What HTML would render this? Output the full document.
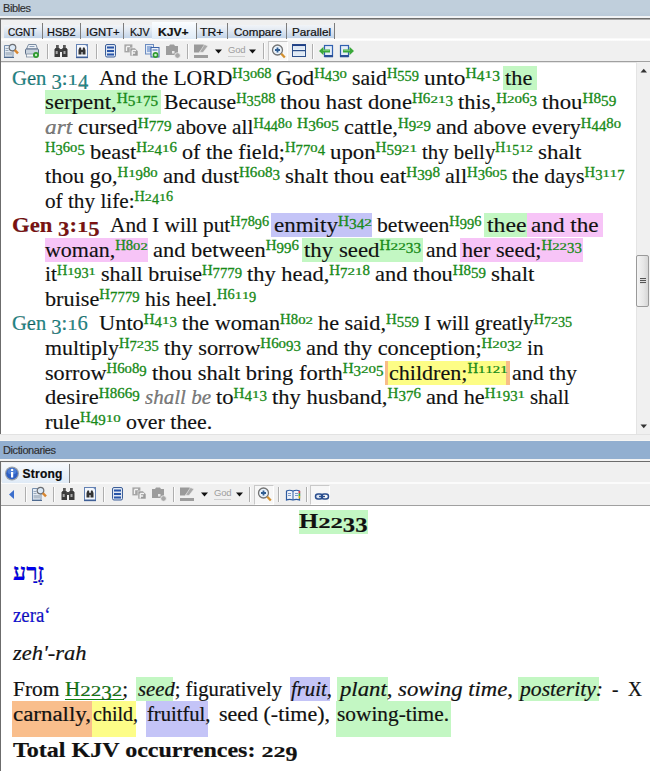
<!DOCTYPE html>
<html><head><meta charset="utf-8">
<style>
*{margin:0;padding:0;box-sizing:border-box}
html,body{width:650px;height:771px;overflow:hidden;background:#f0f0f0;font-family:"Liberation Sans",sans-serif}
.a{position:absolute}
.ttl{position:absolute;left:0;width:650px;font-size:11px;color:#2e2e2e;padding-left:3px;letter-spacing:-0.4px;-webkit-text-stroke:0.15px #2e2e2e}
.tab{position:absolute;top:25px;height:13px;padding-top:1px;background:linear-gradient(#f1f4f8,#e2e9f2 40%,#c2d4e9);font-size:11px;color:#151515;text-align:center;line-height:13px;-webkit-text-stroke:0.2px #151515;letter-spacing:-0.2px}
.tabsel{position:absolute;background:linear-gradient(#fbfdff,#dfebf7);font-size:11px;font-weight:bold;color:#0a0a0a;text-align:center;-webkit-text-stroke:0.2px #0a0a0a}
.tlab{position:absolute;top:26px;font-size:11px;line-height:13px;color:#111;-webkit-text-stroke:0.2px #111;transform-origin:0 0;white-space:nowrap}
.sep{position:absolute;width:1px;background:#7c7c7c}
.tsep{position:absolute;width:2px;border-left:1px solid #c4c4c4;border-right:1px solid #fff}
.ic{position:absolute;width:16px;height:16px}
.vl{position:absolute;white-space:nowrap;font-family:"Liberation Serif",serif;font-size:21px;line-height:24px;color:#111;transform-origin:0 0;-webkit-text-stroke:0.15px #111}
.vl sup span{display:inline-block;line-height:14px}
.lo{transform:scaleY(.74);transform-origin:50% 11.7px}
.de{transform:translateY(2.6px) scaleY(.98)}
.vl sup{font-size:14px;color:#178a17;-webkit-text-stroke:0.3px #178a17;vertical-align:baseline;position:relative;top:-6.5px;line-height:0;font-family:"Liberation Serif",serif}
.ref{color:#1f8a8a}
.ref2{color:#7d1111;font-weight:bold}
.gr{color:#7f7f7f}
.hg{background:#c3f7c3;padding:1px 0}
.hl{background:#c4c4f7;padding:1px 0}
.hp{background:#f7c4f7;padding:1px 0}
.hy{background:#fdfd86;padding:1px 0}
.ho{background:#f8bd88;padding:1px 4px}
.hod{background:#f9be8c;padding:1px 0 11px}
.hyd{background:#fdfd88;padding:1px 0 11px}
.hld{background:#c4c4f7;padding:1px 0 11px}
.hgd{background:#c3f7c3;padding:1px 0 11px}
.dl{position:absolute;white-space:nowrap;font-family:"Liberation Serif",serif;font-size:20px;line-height:24px;color:#111;transform-origin:0 0;-webkit-text-stroke:0.2px #111}
</style></head><body>
<!-- ===== Bibles pane ===== -->
<div class="a" style="left:0;top:0;width:650px;height:16px;background:linear-gradient(#c0cfdc 70%,#bacad9)"></div>
<div class="ttl" style="top:1px;height:16px;line-height:15px">Bibles</div>
<div class="a" style="left:0;top:16px;width:650px;height:2px;background:#f1f3f5"></div>
<div class="a" style="left:0;top:18px;width:650px;height:1px;background:#6e6e6e"></div>
<div class="a" style="left:0;top:19px;width:650px;height:1px;background:#a9a9a9"></div>
<div class="a" style="left:0;top:19px;width:1px;height:415px;background:#6c6c6c"></div>
<div class="a" style="left:1px;top:38px;width:649px;height:3px;background:linear-gradient(#f6f6f6,#fff,#f8f8f8)"></div>
<div class="a" style="left:1px;top:61px;width:649px;height:1px;background:#a0a0a0"></div>
<div class="tab" style="left:4px;width:38px"></div>
<div class="tab" style="left:43px;width:37px"></div>
<div class="tab" style="left:81px;width:42px"></div>
<div class="tab" style="left:124px;width:28px"></div>
<div class="tab" style="left:197px;width:30px"></div>
<div class="tab" style="left:228px;width:58px"></div>
<div class="tab" style="left:287px;width:47px"></div>
<div class="sep" style="left:42px;top:23px;height:16px"></div>
<div class="sep" style="left:80px;top:23px;height:16px"></div>
<div class="sep" style="left:123px;top:23px;height:16px"></div>
<div class="sep" style="left:196px;top:23px;height:16px"></div>
<div class="sep" style="left:227px;top:23px;height:16px"></div>
<div class="sep" style="left:286px;top:23px;height:16px"></div>
<div class="sep" style="left:334px;top:23px;height:16px"></div>
<div class="tabsel" style="left:152px;top:22px;width:44px;height:17px"></div>
<div class="tlab" style="left:8.0px;font-weight:normal;transform:scaleX(0.911)">CGNT</div>
<div class="tlab" style="left:47.2px;font-weight:normal;transform:scaleX(0.993)">HSB2</div>
<div class="tlab" style="left:86.0px;font-weight:normal;transform:scaleX(1.025)">IGNT+</div>
<div class="tlab" style="left:129.5px;font-weight:normal;transform:scaleX(0.969)">KJV</div>
<div class="tlab" style="left:157.5px;font-weight:bold;transform:scaleX(1.101)">KJV+</div>
<div class="tlab" style="left:200.0px;font-weight:normal;transform:scaleX(1.109)">TR+</div>
<div class="tlab" style="left:233.9px;font-weight:normal;transform:scaleX(1.052)">Compare</div>
<div class="tlab" style="left:291.5px;font-weight:normal;transform:scaleX(1.064)">Parallel</div>
<svg class="a" style="left:3px;top:42.5px" width="16" height="16" viewBox="0 0 16 16"><path d="M1.5 2.5h8.5v11.5h-8.5z" fill="#e4ebf4" stroke="#7890ae"/>
<path d="M1 14.5h10" stroke="#4f6a8f"/><rect x="2.5" y="9" width="7" height="3.5" fill="#b3bfcc"/>
<path d="M2.5 5.5h3M2.5 7.5h3" stroke="#9aaabb"/>
<circle cx="9.5" cy="4.6" r="3.3" fill="#dbe9f7" stroke="#6b6e73" stroke-width="1.2"/>
<path d="M11.8 7.2l3.2 3.2" stroke="#d8862f" stroke-width="2.4"/></svg>
<svg class="a" style="left:24px;top:43px" width="16" height="16" viewBox="0 0 16 16"><path d="M4.5 1.5h7.5l1.5 4.5h-11z" fill="#edf1f6" stroke="#7a8ba0"/><path d="M5.5 3.5h5" stroke="#8aa0bb"/>
<rect x="1.5" y="6" width="13" height="5.5" rx="1" fill="#c9d3de" stroke="#5a6d87"/>
<rect x="2.5" y="11" width="9.5" height="3" fill="#f5f7f9" stroke="#7f8ea0" stroke-width=".8"/>
<circle cx="12" cy="12" r="3" fill="#2e9a2e"/><circle cx="12" cy="12" r="1.2" fill="#c8eec8"/></svg>
<div class="a" style="left:47px;top:44px;width:1px;height:15px;background:#aeaeae"></div><div class="a" style="left:48px;top:44px;width:1px;height:15px;background:#fdfdfd"></div>
<svg class="a" style="left:53px;top:43px" width="16" height="16" viewBox="0 0 16 16"><rect x="3" y="2" width="2.8" height="3.5" fill="#5a5a5a"/><rect x="10" y="2" width="2.8" height="3.5" fill="#5a5a5a"/>
<path d="M1.5 6.5l1-1.5h4l.5 1.5v7.5h-5.5z" fill="#3a3a3a"/><path d="M14.5 6.5l-1-1.5h-4l-.5 1.5v7.5h5.5z" fill="#3a3a3a"/>
<rect x="6.5" y="6" width="3" height="3" fill="#444"/><rect x="2.7" y="8" width="2" height="3" fill="#a9a9a9"/><rect x="10.5" y="8" width="2" height="3" fill="#a9a9a9"/></svg>
<svg class="a" style="left:75px;top:43px" width="16" height="16" viewBox="0 0 16 16"><rect x="1.5" y="1.5" width="11" height="12.5" fill="#f3f6fb" stroke="#6482b4"/>
<path d="M1 14.5h12" stroke="#3f5f96" stroke-width="1.3"/><path d="M10 1.2l2.8 2.8" stroke="#6482b4"/>
<path d="M3.5 7l1-2.5h1.5l.5 2.5v4.5h-3zM10.5 7l-1-2.5H8l-.5 2.5v4.5h3z" fill="#333"/><rect x="6" y="7" width="2" height="2" fill="#333"/></svg>
<div class="a" style="left:96px;top:44px;width:1px;height:15px;background:#aeaeae"></div><div class="a" style="left:97px;top:44px;width:1px;height:15px;background:#fdfdfd"></div>
<svg class="a" style="left:104px;top:43px" width="16" height="16" viewBox="0 0 16 16"><rect x="1.5" y="1.5" width="10" height="12.5" rx="1.5" fill="#dfe7f2" stroke="#3d5f99"/>
<rect x="3" y="3.5" width="7" height="2" fill="#2855a8"/><rect x="3" y="7" width="7" height="2" fill="#2855a8"/><rect x="3" y="10.5" width="7" height="2" fill="#2855a8"/></svg>
<svg class="a" style="left:123px;top:43px" width="16" height="16" viewBox="0 0 16 16"><rect x="1.4" y="1.4" width="8" height="8" fill="#a5a5a5"/><path d="M3.5 3.5h3.5M3.5 3.5v4.5" stroke="#f4f4f4" stroke-width="1.3"/>
<path d="M7 5h5l3 3v5H7z" fill="#9a9a9a" stroke="#f0f0f0" stroke-width=".6"/><path d="M9.2 7.5h4M9.2 7.5v5M9.2 10h3" stroke="#f4f4f4" stroke-width="1.4"/></svg>
<svg class="a" style="left:144px;top:43px" width="16" height="16" viewBox="0 0 16 16"><rect x="1.5" y="1.5" width="8" height="9.5" fill="#e3ebf6" stroke="#6c8cc0"/><path d="M3 4h5M3 6h5M3 8h5" stroke="#4a78c2"/>
<rect x="7" y="4.5" width="8" height="9.5" fill="#eef3fa" stroke="#3a62a8"/><path d="M8.5 7h5" stroke="#3a62a8"/>
<circle cx="11.5" cy="12" r="2.9" fill="#2f9a2f"/><circle cx="11.5" cy="12" r="1.3" fill="#d0f0d0"/></svg>
<svg class="a" style="left:165px;top:43px" width="16" height="16" viewBox="0 0 16 16"><path d="M1 3h3l1-1.5h4l1 1.5h3v9H1z" fill="#9c9c9c"/>
<circle cx="12.5" cy="12.5" r="2.8" fill="#a8a8a8" stroke="#f0f0f0" stroke-width=".8"/><rect x="7" y="8" width="2.5" height="2.5" fill="#e8e8e8"/></svg>
<div class="a" style="left:187px;top:44px;width:1px;height:15px;background:#aeaeae"></div><div class="a" style="left:188px;top:44px;width:1px;height:15px;background:#fdfdfd"></div>
<svg class="a" style="left:193px;top:43px" width="16" height="16" viewBox="0 0 16 16"><path d="M1 1.5h9.5l1.5 1.5-6 6.5H1z" fill="#9a9a9a"/><path d="M11.5 1.5l3.5 1.5-5 6.5-3.5-.3z" fill="#a9a9a9" stroke="#f0f0f0" stroke-width=".6"/>
<rect x="1" y="12" width="14" height="3" fill="#9d9d9d"/></svg>
<svg class="a" style="left:214.5px;top:48.5px" width="8" height="5" viewBox="0 0 8 5"><path d="M0 0.5h7L3.5 4.5z" fill="#111"/></svg>
<div class="a" style="left:228px;top:44px;font-size:9.5px;color:#9d9d9d;line-height:11px;border-bottom:1px solid #cfcfcf;padding-bottom:1px;letter-spacing:-0.2px">God</div>
<svg class="a" style="left:249px;top:48.5px" width="8" height="5" viewBox="0 0 8 5"><path d="M0 0.5h7L3.5 4.5z" fill="#111"/></svg>
<div class="a" style="left:263px;top:43px;width:1px;height:16px;background:#aeaeae"></div><div class="a" style="left:264px;top:43px;width:1px;height:16px;background:#fdfdfd"></div>
<div class="a" style="left:268px;top:41px;width:20px;height:20px;background:#f7f7f7;border:1px solid #c9c9c9;border-right-color:#fff;border-bottom-color:#fff"></div>
<svg class="a" style="left:271px;top:43px" width="16" height="16" viewBox="0 0 16 16"><circle cx="6.5" cy="7" r="5" fill="#e9f2fb" stroke="#737373" stroke-width="1.3"/>
<path d="M4 7h5M6.5 4.5v5" stroke="#2f5d92" stroke-width="1.8"/><path d="M10.3 10.8l3.5 3.7" stroke="#d4912f" stroke-width="2.3"/></svg>
<svg class="a" style="left:291px;top:43px" width="16" height="16" viewBox="0 0 16 16"><rect x="1.5" y="1.5" width="13" height="12" fill="#f2f6fb" stroke="#2c4f8a"/><rect x="1.5" y="1.5" width="13" height="1.6" fill="#1f3f86"/>
<rect x="2" y="7" width="12" height="1.3" fill="#2c4f8a"/><rect x="2.5" y="3.6" width="11" height="3" fill="#dfe9f4"/><rect x="2.5" y="8.8" width="11" height="4" fill="#dfe9f4"/></svg>
<div class="a" style="left:312px;top:44px;width:1px;height:15px;background:#aeaeae"></div><div class="a" style="left:313px;top:44px;width:1px;height:15px;background:#fdfdfd"></div>
<svg class="a" style="left:318px;top:43px" width="16" height="16" viewBox="0 0 16 16"><rect x="6.5" y="2.5" width="8" height="11" fill="#e6eef8" stroke="#3060b0" stroke-width="1.2"/><rect x="6.5" y="12" width="8.5" height="2.2" fill="#2a4f96"/>
<path d="M1 8l4.5-4.3v2.8h6.5v3H5.5v2.8z" fill="#3aa83a"/><path d="M5 7.2h6.5" stroke="#8fd88f" stroke-width=".9"/></svg>
<svg class="a" style="left:339px;top:43px" width="16" height="16" viewBox="0 0 16 16"><rect x="1.5" y="2.5" width="8" height="11" fill="#e6eef8" stroke="#3060b0" stroke-width="1.2"/><rect x="1" y="12" width="8.5" height="2.2" fill="#2a4f96"/>
<path d="M15 8l-4.5-4.3v2.8H4v3h6.5v2.8z" fill="#3aa83a"/><path d="M4.5 7.2H11" stroke="#8fd88f" stroke-width=".9"/></svg>
<div class="a" style="left:1px;top:62px;width:635px;height:372px;background:#fff"></div>
<div class="a" style="left:1px;top:62px;width:635px;height:1px;background:#e6e6e6"></div>
<div class="a" style="left:636px;top:62px;width:14px;height:372px;background:#f0f0f0;border-left:1px solid #e4e4e4"></div>
<svg class="a" style="left:640px;top:68px" width="8" height="5" viewBox="0 0 8 5"><path d="M0.5 4.5h6.5L3.75 0.8z" fill="#333"/></svg>
<svg class="a" style="left:640px;top:424px" width="8" height="5" viewBox="0 0 8 5"><path d="M0.5 0.5h6.5L3.75 4.2z" fill="#333"/></svg>
<div class="a" style="left:636px;top:255px;width:13px;height:52px;border:1px solid #9a9a9a;border-radius:2px;background:linear-gradient(90deg,#f4f4f4,#e6e6e6 60%,#d6d6d6)"></div>
<div class="a" style="left:640px;top:278px;width:6px;height:1px;background:#555;box-shadow:0 2px 0 #555,0 4px 0 #555,0 1px 0 #ddd,0 3px 0 #ddd,0 5px 0 #ddd"></div>
<div class="a" style="left:503.2px;top:65.90px;width:33.80px;height:24px;background:#c3f7c3"></div>
<div class="a" style="left:44.8px;top:90.45px;width:116.70px;height:24px;background:#c3f7c3"></div>
<div class="a" style="left:271.4px;top:213.20px;width:101.10px;height:24px;background:#c4c4f7"></div>
<div class="a" style="left:484px;top:213.20px;width:43.00px;height:24px;background:#c3f7c3"></div>
<div class="a" style="left:527px;top:213.20px;width:76.40px;height:24px;background:#f7c4f7"></div>
<div class="a" style="left:44.8px;top:237.75px;width:103.40px;height:24px;background:#f7c4f7"></div>
<div class="a" style="left:302px;top:237.75px;width:120.50px;height:24px;background:#c3f7c3"></div>
<div class="a" style="left:460px;top:237.75px;width:123.00px;height:24px;background:#f7c4f7"></div>
<div class="a" style="left:384.7px;top:360.50px;width:125.30px;height:24px;background:#f8bd88"></div>
<div class="a" style="left:388px;top:360.50px;width:118.00px;height:24px;background:#fdfd86"></div><div class="vl" id="v0_0" style="left:12.3px;top:65.91px;transform:scaleX(0.98204)"><span class="ref">Gen <span style="display:inline-block;line-height:23.25px;transform:translateY(3.99px)">3</span>:<span style="display:inline-block;line-height:23.25px;transform:scaleY(.74);transform-origin:50% 18.71px">1</span><span style="display:inline-block;line-height:23.25px;transform:translateY(3.99px)">4</span></span></div>
<div class="vl" id="v0_1" style="left:98.5px;top:65.91px;transform:scaleX(1.02908)">And the LORD<sup>H<span class="de">3</span><span class="lo">0</span>68</sup></div>
<div class="vl" id="v0_2" style="left:276px;top:65.91px;transform:scaleX(1.05503)">God<sup>H<span class="de">4</span><span class="de">3</span><span class="lo">0</span></sup></div>
<div class="vl" id="v0_3" style="left:352px;top:65.91px;transform:scaleX(1.03151)">said<sup>H<span class="de">5</span><span class="de">5</span><span class="de">9</span></sup></div>
<div class="vl" id="v0_4" style="left:424px;top:65.91px;transform:scaleX(1.11000)">unto<sup>H<span class="de">4</span><span class="lo">1</span><span class="de">3</span></sup></div>
<div class="vl" id="v0_5" style="left:505px;top:65.91px;transform:scaleX(1.06407)">the</div>
<div class="vl" id="v1_0" style="left:45.3px;top:90.46px;transform:scaleX(1.08813)">serpent,<sup>H<span class="de">5</span><span class="lo">1</span><span class="de">7</span><span class="de">5</span></sup></div>
<div class="vl" id="v1_1" style="left:163.5px;top:90.46px;transform:scaleX(1.03151)">Because<sup>H<span class="de">3</span><span class="de">5</span>88</sup></div>
<div class="vl" id="v1_2" style="left:280px;top:90.46px;transform:scaleX(1.07715)">thou hast done<sup>H6<span class="lo">2</span><span class="lo">1</span><span class="de">3</span></sup></div>
<div class="vl" id="v1_3" style="left:458px;top:90.46px;transform:scaleX(1.07164)">this,<sup>H<span class="lo">2</span><span class="lo">0</span>6<span class="de">3</span></sup></div>
<div class="vl" id="v1_4" style="left:542px;top:90.46px;transform:scaleX(1.08517)">thou<sup>H8<span class="de">5</span><span class="de">9</span></sup></div>
<div class="vl" id="v2_0" style="left:45.3px;top:115.01px;transform:scaleX(1.10950)"><i class="gr">art</i></div>
<div class="vl" id="v2_1" style="left:77.5px;top:115.01px;transform:scaleX(1.08800)">cursed<sup>H<span class="de">7</span><span class="de">7</span><span class="de">9</span></sup></div>
<div class="vl" id="v2_2" style="left:176px;top:115.01px;transform:scaleX(1.01296)">above all<sup>H<span class="de">4</span><span class="de">4</span>8<span class="lo">0</span></sup></div>
<div class="vl" id="v2_3" style="left:297px;top:115.01px;transform:scaleX(1.10164)"><sup>H<span class="de">3</span>6<span class="lo">0</span><span class="de">5</span></sup></div>
<div class="vl" id="v2_4" style="left:344px;top:115.01px;transform:scaleX(1.06300)">cattle,<sup>H<span class="de">9</span><span class="lo">2</span><span class="de">9</span></sup></div>
<div class="vl" id="v2_5" style="left:436px;top:115.01px;transform:scaleX(1.05273)">and above every<sup>H<span class="de">4</span><span class="de">4</span>8<span class="lo">0</span></sup></div>
<div class="vl" id="v3_0" style="left:45.3px;top:139.56px;transform:scaleX(1.04131)"><sup>H<span class="de">3</span>6<span class="lo">0</span><span class="de">5</span></sup></div>
<div class="vl" id="v3_1" style="left:90px;top:139.56px;transform:scaleX(1.07036)">beast<sup>H<span class="lo">2</span><span class="de">4</span><span class="lo">1</span>6</sup></div>
<div class="vl" id="v3_2" style="left:182px;top:139.56px;transform:scaleX(1.05075)">of the field;<sup>H<span class="de">7</span><span class="de">7</span><span class="lo">0</span><span class="de">4</span></sup></div>
<div class="vl" id="v3_3" style="left:330px;top:139.56px;transform:scaleX(1.08580)">upon<sup>H<span class="de">5</span><span class="de">9</span><span class="lo">2</span><span class="lo">1</span></sup></div>
<div class="vl" id="v3_4" style="left:422px;top:139.56px;transform:scaleX(0.98928)">thy belly<sup>H<span class="lo">1</span><span class="de">5</span><span class="lo">1</span><span class="lo">2</span></sup></div>
<div class="vl" id="v3_5" style="left:538px;top:139.56px;transform:scaleX(1.09397)">shalt</div>
<div class="vl" id="v4_0" style="left:45.3px;top:164.11px;transform:scaleX(1.05358)">thou go,<sup>H<span class="lo">1</span><span class="de">9</span>8<span class="lo">0</span></sup></div>
<div class="vl" id="v4_1" style="left:163px;top:164.11px;transform:scaleX(1.07633)">and dust<sup>H6<span class="lo">0</span>8<span class="de">3</span></sup></div>
<div class="vl" id="v4_2" style="left:285px;top:164.11px;transform:scaleX(1.08309)">shalt thou eat<sup>H<span class="de">3</span><span class="de">9</span>8</sup></div>
<div class="vl" id="v4_3" style="left:445px;top:164.11px;transform:scaleX(1.04863)">all<sup>H<span class="de">3</span>6<span class="lo">0</span><span class="de">5</span></sup></div>
<div class="vl" id="v4_4" style="left:512px;top:164.11px;transform:scaleX(1.04621)">the days<sup>H<span class="de">3</span><span class="lo">1</span><span class="lo">1</span><span class="de">7</span></sup></div>
<div class="vl" id="v5_0" style="left:45.3px;top:188.66px;transform:scaleX(1.01040)">of thy life:<sup>H<span class="lo">2</span><span class="de">4</span><span class="lo">1</span>6</sup></div>
<div class="vl" id="v6_0" style="left:12.3px;top:213.21px;transform:scaleX(1.08146)"><span class="ref2">Gen <span style="display:inline-block;line-height:23.25px;transform:translateY(3.99px)">3</span>:<span style="display:inline-block;line-height:23.25px;transform:scaleY(.74);transform-origin:50% 18.71px">1</span><span style="display:inline-block;line-height:23.25px;transform:translateY(3.99px)">5</span></span></div>
<div class="vl" id="v6_1" style="left:110px;top:213.21px;transform:scaleX(1.01567)">And I will put<sup>H<span class="de">7</span>8<span class="de">9</span>6</sup></div>
<div class="vl" id="v6_2" style="left:274px;top:213.21px;transform:scaleX(1.09555)">enmity<sup>H<span class="de">3</span><span class="de">4</span><span class="lo">2</span></sup></div>
<div class="vl" id="v6_3" style="left:377px;top:213.21px;transform:scaleX(1.03369)">between<sup>H<span class="de">9</span><span class="de">9</span>6</sup></div>
<div class="vl" id="v6_4" style="left:486.5px;top:213.21px;transform:scaleX(1.12908)">thee</div>
<div class="vl" id="v6_5" style="left:531px;top:213.21px;transform:scaleX(1.10396)">and the</div>
<div class="vl" id="v7_0" style="left:45.3px;top:237.76px;transform:scaleX(1.04579)">woman,<sup>H8<span class="lo">0</span><span class="lo">2</span></sup></div>
<div class="vl" id="v7_1" style="left:153px;top:237.76px;transform:scaleX(1.06825)">and between<sup>H<span class="de">9</span><span class="de">9</span>6</sup></div>
<div class="vl" id="v7_2" style="left:304px;top:237.76px;transform:scaleX(1.08806)">thy seed<sup>H<span class="lo">2</span><span class="lo">2</span><span class="de">3</span><span class="de">3</span></sup></div>
<div class="vl" id="v7_3" style="left:426px;top:237.76px;transform:scaleX(1.02215)">and</div>
<div class="vl" id="v7_4" style="left:462px;top:237.76px;transform:scaleX(1.05696)">her seed;<sup>H<span class="lo">2</span><span class="lo">2</span><span class="de">3</span><span class="de">3</span></sup></div>
<div class="vl" id="v8_0" style="left:45.3px;top:262.31px;transform:scaleX(1.01814)">it<sup>H<span class="lo">1</span><span class="de">9</span><span class="de">3</span><span class="lo">1</span></sup></div>
<div class="vl" id="v8_1" style="left:101px;top:262.31px;transform:scaleX(1.04942)">shall bruise<sup>H<span class="de">7</span><span class="de">7</span><span class="de">7</span><span class="de">9</span></sup></div>
<div class="vl" id="v8_2" style="left:247px;top:262.31px;transform:scaleX(1.06855)">thy head,<sup>H<span class="de">7</span><span class="lo">2</span><span class="lo">1</span>8</sup></div>
<div class="vl" id="v8_3" style="left:375px;top:262.31px;transform:scaleX(1.06699)">and thou<sup>H8<span class="de">5</span><span class="de">9</span></sup></div>
<div class="vl" id="v8_4" style="left:491px;top:262.31px;transform:scaleX(1.09649)">shalt</div>
<div class="vl" id="v9_0" style="left:45.3px;top:286.86px;transform:scaleX(1.05866)">bruise<sup>H<span class="de">7</span><span class="de">7</span><span class="de">7</span><span class="de">9</span></sup></div>
<div class="vl" id="v9_1" style="left:145px;top:286.86px;transform:scaleX(1.02951)">his heel.<sup>H6<span class="lo">1</span><span class="lo">1</span><span class="de">9</span></sup></div>
<div class="vl" id="v10_0" style="left:12.3px;top:311.41px;transform:scaleX(0.97559)"><span class="ref">Gen <span style="display:inline-block;line-height:23.25px;transform:translateY(3.99px)">3</span>:<span style="display:inline-block;line-height:23.25px;transform:scaleY(.74);transform-origin:50% 18.71px">1</span>6</span></div>
<div class="vl" id="v10_1" style="left:99px;top:311.41px;transform:scaleX(1.06667)">Unto<sup>H<span class="de">4</span><span class="lo">1</span><span class="de">3</span></sup></div>
<div class="vl" id="v10_2" style="left:182px;top:311.41px;transform:scaleX(1.05765)">the woman<sup>H8<span class="lo">0</span><span class="lo">2</span></sup></div>
<div class="vl" id="v10_3" style="left:318px;top:311.41px;transform:scaleX(1.06002)">he said,<sup>H<span class="de">5</span><span class="de">5</span><span class="de">9</span></sup></div>
<div class="vl" id="v10_4" style="left:424px;top:311.41px;transform:scaleX(1.01096)">I will greatly<sup>H<span class="de">7</span><span class="lo">2</span><span class="de">3</span><span class="de">5</span></sup></div>
<div class="vl" id="v11_0" style="left:45.3px;top:335.96px;transform:scaleX(1.04014)">multiply<sup>H<span class="de">7</span><span class="lo">2</span><span class="de">3</span><span class="de">5</span></sup></div>
<div class="vl" id="v11_1" style="left:164px;top:335.96px;transform:scaleX(1.06576)">thy sorrow<sup>H6<span class="lo">0</span><span class="de">9</span><span class="de">3</span></sup></div>
<div class="vl" id="v11_2" style="left:306px;top:335.96px;transform:scaleX(1.06012)">and thy conception;<sup>H<span class="lo">2</span><span class="lo">0</span><span class="de">3</span><span class="lo">2</span></sup></div>
<div class="vl" id="v11_3" style="left:527px;top:335.96px;transform:scaleX(1.00956)">in</div>
<div class="vl" id="v12_0" style="left:45.3px;top:360.51px;transform:scaleX(1.05440)">sorrow<sup>H6<span class="lo">0</span>8<span class="de">9</span></sup></div>
<div class="vl" id="v12_1" style="left:152px;top:360.51px;transform:scaleX(1.07160)">thou shalt bring forth<sup>H<span class="de">3</span><span class="lo">2</span><span class="lo">0</span><span class="de">5</span></sup></div>
<div class="vl" id="v12_2" style="left:388.5px;top:360.51px;transform:scaleX(1.05085)">children;<sup>H<span class="lo">1</span><span class="lo">1</span><span class="lo">2</span><span class="lo">1</span></sup></div>
<div class="vl" id="v12_3" style="left:512px;top:360.51px;transform:scaleX(1.04156)">and thy</div>
<div class="vl" id="v13_0" style="left:45.3px;top:385.06px;transform:scaleX(1.07271)">desire<sup>H866<span class="de">9</span></sup></div>
<div class="vl" id="v13_1" style="left:145px;top:385.06px;transform:scaleX(1.00119)"><i class="gr">shall be</i></div>
<div class="vl" id="v13_2" style="left:216px;top:385.06px;transform:scaleX(1.07439)">to<sup>H<span class="de">4</span><span class="lo">1</span><span class="de">3</span></sup></div>
<div class="vl" id="v13_3" style="left:272px;top:385.06px;transform:scaleX(1.07618)">thy husband,<sup>H<span class="de">3</span><span class="de">7</span>6</sup></div>
<div class="vl" id="v13_4" style="left:426px;top:385.06px;transform:scaleX(1.05847)">and he<sup>H<span class="lo">1</span><span class="de">9</span><span class="de">3</span><span class="lo">1</span></sup></div>
<div class="vl" id="v13_5" style="left:530px;top:385.06px;transform:scaleX(0.99315)">shall</div>
<div class="vl" id="v14_0" style="left:45.3px;top:409.61px;transform:scaleX(1.06949)">rule<sup>H<span class="de">4</span><span class="de">9</span><span class="lo">1</span><span class="lo">0</span></sup></div>
<div class="vl" id="v14_1" style="left:126px;top:409.61px;transform:scaleX(1.04110)">over thee.</div>
<!-- splitter -->
<div class="a" style="left:0;top:434px;width:650px;height:1px;background:#e2e2e2"></div>
<!-- ===== Dictionaries pane ===== -->
<div class="a" style="left:0;top:440px;width:650px;height:1px;background:#f6f6f4"></div>
<div class="a" style="left:0;top:441px;width:650px;height:18px;background:#92afd0"></div>
<div class="ttl" style="top:442px;height:17px;line-height:17px">Dictionaries</div>
<div class="a" style="left:0;top:459px;width:650px;height:2px;background:#f3f3f3"></div>
<div class="a" style="left:0;top:461px;width:650px;height:1px;background:#6c6c6c"></div>
<div class="a" style="left:0;top:461px;width:1px;height:310px;background:#6c6c6c"></div>
<div class="a" style="left:1px;top:482px;width:649px;height:2px;background:#fbfbfb"></div>
<div class="a" style="left:1px;top:505px;width:649px;height:1px;background:#a0a0a0"></div>
<div class="tabsel" style="left:2px;top:463px;width:67px;height:20px;background:linear-gradient(#f6f9fd,#dfeaf6)"></div>
<svg class="a" style="left:4px;top:466px" width="16" height="16" viewBox="0 0 16 16"><circle cx="8" cy="7.5" r="7" fill="#9aa0a8"/><circle cx="8" cy="7.5" r="5.8" fill="#2d5fc4"/><ellipse cx="8" cy="5.5" rx="4.5" ry="3" fill="#6a9ae6" opacity=".55"/>
<rect x="7" y="6" width="2.2" height="5.5" fill="#fff"/><circle cx="8.1" cy="3.9" r="1.2" fill="#fff"/></svg>
<div class="a" style="left:22.5px;top:466px;font-size:12px;font-weight:bold;color:#0a0a0a;line-height:16px;letter-spacing:0.25px;-webkit-text-stroke:0.2px #0a0a0a">Strong</div>
<div class="sep" style="left:69px;top:464px;height:19px"></div>
<svg class="a" style="left:7px;top:486px" width="16" height="16" viewBox="0 0 16 16"><path d="M7 4v9l-5-4.5z" fill="#3c6fcc"/></svg>
<div class="a" style="left:25px;top:487px;width:1px;height:15px;background:#aeaeae"></div><div class="a" style="left:26px;top:487px;width:1px;height:15px;background:#fdfdfd"></div>
<svg class="a" style="left:31px;top:485.5px" width="16" height="16" viewBox="0 0 16 16"><path d="M1.5 2.5h8.5v11.5h-8.5z" fill="#e4ebf4" stroke="#7890ae"/>
<path d="M1 14.5h10" stroke="#4f6a8f"/><rect x="2.5" y="9" width="7" height="3.5" fill="#b3bfcc"/>
<path d="M2.5 5.5h3M2.5 7.5h3" stroke="#9aaabb"/>
<circle cx="9.5" cy="4.6" r="3.3" fill="#dbe9f7" stroke="#6b6e73" stroke-width="1.2"/>
<path d="M11.8 7.2l3.2 3.2" stroke="#d8862f" stroke-width="2.4"/></svg>
<div class="a" style="left:53px;top:487px;width:1px;height:15px;background:#aeaeae"></div><div class="a" style="left:54px;top:487px;width:1px;height:15px;background:#fdfdfd"></div>
<svg class="a" style="left:60px;top:486px" width="16" height="16" viewBox="0 0 16 16"><rect x="3" y="2" width="2.8" height="3.5" fill="#5a5a5a"/><rect x="10" y="2" width="2.8" height="3.5" fill="#5a5a5a"/>
<path d="M1.5 6.5l1-1.5h4l.5 1.5v7.5h-5.5z" fill="#3a3a3a"/><path d="M14.5 6.5l-1-1.5h-4l-.5 1.5v7.5h5.5z" fill="#3a3a3a"/>
<rect x="6.5" y="6" width="3" height="3" fill="#444"/><rect x="2.7" y="8" width="2" height="3" fill="#a9a9a9"/><rect x="10.5" y="8" width="2" height="3" fill="#a9a9a9"/></svg>
<svg class="a" style="left:83px;top:486px" width="16" height="16" viewBox="0 0 16 16"><rect x="1.5" y="1.5" width="11" height="12.5" fill="#f3f6fb" stroke="#6482b4"/>
<path d="M1 14.5h12" stroke="#3f5f96" stroke-width="1.3"/><path d="M10 1.2l2.8 2.8" stroke="#6482b4"/>
<path d="M3.5 7l1-2.5h1.5l.5 2.5v4.5h-3zM10.5 7l-1-2.5H8l-.5 2.5v4.5h3z" fill="#333"/><rect x="6" y="7" width="2" height="2" fill="#333"/></svg>
<div class="a" style="left:103px;top:487px;width:1px;height:15px;background:#aeaeae"></div><div class="a" style="left:104px;top:487px;width:1px;height:15px;background:#fdfdfd"></div>
<svg class="a" style="left:111px;top:486px" width="16" height="16" viewBox="0 0 16 16"><rect x="1.5" y="1.5" width="10" height="12.5" rx="1.5" fill="#dfe7f2" stroke="#3d5f99"/>
<rect x="3" y="3.5" width="7" height="2" fill="#2855a8"/><rect x="3" y="7" width="7" height="2" fill="#2855a8"/><rect x="3" y="10.5" width="7" height="2" fill="#2855a8"/></svg>
<svg class="a" style="left:131px;top:486px" width="16" height="16" viewBox="0 0 16 16"><rect x="1.4" y="1.4" width="8" height="8" fill="#a5a5a5"/><path d="M3.5 3.5h3.5M3.5 3.5v4.5" stroke="#f4f4f4" stroke-width="1.3"/>
<path d="M7 5h5l3 3v5H7z" fill="#9a9a9a" stroke="#f0f0f0" stroke-width=".6"/><path d="M9.2 7.5h4M9.2 7.5v5M9.2 10h3" stroke="#f4f4f4" stroke-width="1.4"/></svg>
<svg class="a" style="left:151px;top:486px" width="16" height="16" viewBox="0 0 16 16"><path d="M1 3h3l1-1.5h4l1 1.5h3v9H1z" fill="#9c9c9c"/>
<circle cx="12.5" cy="12.5" r="2.8" fill="#a8a8a8" stroke="#f0f0f0" stroke-width=".8"/><rect x="7" y="8" width="2.5" height="2.5" fill="#e8e8e8"/></svg>
<div class="a" style="left:173px;top:487px;width:1px;height:15px;background:#aeaeae"></div><div class="a" style="left:174px;top:487px;width:1px;height:15px;background:#fdfdfd"></div>
<svg class="a" style="left:179px;top:486px" width="16" height="16" viewBox="0 0 16 16"><path d="M1 1.5h9.5l1.5 1.5-6 6.5H1z" fill="#9a9a9a"/><path d="M11.5 1.5l3.5 1.5-5 6.5-3.5-.3z" fill="#a9a9a9" stroke="#f0f0f0" stroke-width=".6"/>
<rect x="1" y="12" width="14" height="3" fill="#9d9d9d"/></svg>
<svg class="a" style="left:201px;top:491.5px" width="8" height="5" viewBox="0 0 8 5"><path d="M0 0.5h7L3.5 4.5z" fill="#111"/></svg>
<div class="a" style="left:214px;top:487px;font-size:9.5px;color:#9d9d9d;line-height:11px;border-bottom:1px solid #cfcfcf;padding-bottom:1px;letter-spacing:-0.2px">God</div>
<svg class="a" style="left:235.5px;top:491.5px" width="8" height="5" viewBox="0 0 8 5"><path d="M0 0.5h7L3.5 4.5z" fill="#111"/></svg>
<div class="a" style="left:249px;top:487px;width:1px;height:15px;background:#aeaeae"></div><div class="a" style="left:250px;top:487px;width:1px;height:15px;background:#fdfdfd"></div>
<div class="a" style="left:254px;top:485px;width:20px;height:20px;background:#f7f7f7;border:1px solid #c9c9c9;border-right-color:#fff;border-bottom-color:#fff"></div>
<svg class="a" style="left:257px;top:486px" width="16" height="16" viewBox="0 0 16 16"><circle cx="6.5" cy="7" r="5" fill="#e9f2fb" stroke="#737373" stroke-width="1.3"/>
<path d="M4 7h5M6.5 4.5v5" stroke="#2f5d92" stroke-width="1.8"/><path d="M10.3 10.8l3.5 3.7" stroke="#d4912f" stroke-width="2.3"/></svg>
<div class="a" style="left:278px;top:487px;width:1px;height:15px;background:#aeaeae"></div><div class="a" style="left:279px;top:487px;width:1px;height:15px;background:#fdfdfd"></div>
<svg class="a" style="left:285px;top:486px" width="16" height="16" viewBox="0 0 16 16"><path d="M1.5 5q3-1.5 6.5 0q3.5-1.5 6.5 0v9q-3-1.2-6.5 0q-3.5-1.2-6.5 0z" fill="#f0f4fa" stroke="#2d5aa0" stroke-width="1.2"/>
<path d="M8 5v9" stroke="#2d5aa0"/><path d="M3 7.5h3M3 9.5h3M10 7.5h3M10 9.5h3" stroke="#7c98c8"/>
<rect x="13.6" y="5" width="1.6" height="2.5" fill="#e04040"/><rect x="13.6" y="7.5" width="1.6" height="2.5" fill="#40b040"/><rect x="13.6" y="10" width="1.6" height="2.5" fill="#e0b000"/></svg>
<div class="a" style="left:306px;top:487px;width:1px;height:15px;background:#aeaeae"></div><div class="a" style="left:307px;top:487px;width:1px;height:15px;background:#fdfdfd"></div>
<div class="a" style="left:310px;top:485px;width:20px;height:20px;background:#f7f7f7;border:1px solid #c9c9c9;border-right-color:#fff;border-bottom-color:#fff"></div>
<svg class="a" style="left:314px;top:486px" width="16" height="16" viewBox="0 0 16 16"><rect x="1.5" y="8" width="7" height="5" rx="2.5" fill="#dde6f2" stroke="#2b4f8f" stroke-width="1.5"/><rect x="7.5" y="8" width="7" height="5" rx="2.5" fill="none" stroke="#2b4f8f" stroke-width="1.5"/>
<path d="M5 10.5h6" stroke="#2b4f8f" stroke-width="1.3"/></svg>
<div class="a" style="left:1px;top:506px;width:649px;height:265px;background:#fff"></div>
<div class="a" style="left:298.6px;top:509.8px;width:69.40px;height:24.00px;background:#c3f7c3"></div>
<div class="a" style="left:65px;top:698.5px;width:59.00px;height:1.20px;background:#108010"></div>
<div class="a" style="left:135.5px;top:677px;width:37.80px;height:24.30px;background:#c3f7c3"></div>
<div class="a" style="left:289.6px;top:677px;width:40.40px;height:24.30px;background:#c4c4f7"></div>
<div class="a" style="left:336.8px;top:677px;width:51.70px;height:24.30px;background:#c3f7c3"></div>
<div class="a" style="left:518px;top:677px;width:81.00px;height:24.30px;background:#c3f7c3"></div>
<div class="a" style="left:12px;top:701.3px;width:80.00px;height:35.70px;background:#f9be8c"></div>
<div class="a" style="left:92px;top:701.3px;width:43.50px;height:35.70px;background:#fdfd88"></div>
<div class="a" style="left:145.8px;top:701.3px;width:62.10px;height:35.70px;background:#c4c4f7"></div>
<div class="a" style="left:336px;top:701.3px;width:115.00px;height:35.70px;background:#c3f7c3"></div>
<div class="dl" id="d0_0" style="left:299px;top:508.91px;transform:scaleX(1.17408);"><b style="font-size:21px">H<span style="display:inline-block;line-height:23.25px;transform:scaleY(.74);transform-origin:50% 18.71px">2</span><span style="display:inline-block;line-height:23.25px;transform:scaleY(.74);transform-origin:50% 18.71px">2</span><span style="display:inline-block;line-height:23.25px;transform:translateY(3.99px)">3</span><span style="display:inline-block;line-height:23.25px;transform:translateY(3.99px)">3</span></b></div>
<div class="dl" id="d1_0" style="left:12.5px;top:561.31px;transform:scaleX(1.01190);direction:rtl"><span style="color:#0000f0;font-weight:bold;font-size:23px">זֶרַע</span></div>
<div class="dl" id="d2_0" style="left:12.5px;top:603.31px;transform:scaleX(0.93860);"><span style="color:#1010f0">zera‘</span></div>
<div class="dl" id="d3_0" style="left:12.5px;top:640.71px;transform:scaleX(1.07055);"><i style='font-size:21px'>zeh'-rah</i></div>
<div class="dl" id="d4_0" style="left:12.5px;top:677.31px;transform:scaleX(1.07282);">From</div>
<div class="dl" id="d4_1" style="left:65px;top:677.31px;transform:scaleX(1.04973);"><span style="color:#108010">H<span style="display:inline-block;line-height:22.14px;transform:scaleY(.74);transform-origin:50% 17.82px">2</span><span style="display:inline-block;line-height:22.14px;transform:scaleY(.74);transform-origin:50% 17.82px">2</span><span style="display:inline-block;line-height:22.14px;transform:translateY(3.80px)">3</span><span style="display:inline-block;line-height:22.14px;transform:scaleY(.74);transform-origin:50% 17.82px">2</span></span>;</div>
<div class="dl" id="d4_2" style="left:138px;top:677.31px;transform:scaleX(1.03295);"><i>seed</i>; figuratively</div>
<div class="dl" id="d4_3" style="left:291px;top:677.31px;transform:scaleX(1.03921);"><i>fruit</i>,</div>
<div class="dl" id="d4_4" style="left:340px;top:677.31px;transform:scaleX(1.13629);"><i>plant</i>, <i>sowing time</i>,</div>
<div class="dl" id="d4_5" style="left:520px;top:677.31px;transform:scaleX(1.08276);"><i>posterity:</i></div>
<div class="dl" id="d4_6" style="left:612px;top:677.31px;transform:scaleX(0.96434);">-&nbsp; X</div>
<div class="dl" id="d5_0" style="left:12.5px;top:701.61px;transform:scaleX(1.14522);">carnally,</div>
<div class="dl" id="d5_1" style="left:93px;top:701.61px;transform:scaleX(1.00000);">child,</div>
<div class="dl" id="d5_2" style="left:147px;top:701.61px;transform:scaleX(1.02990);">fruitful,</div>
<div class="dl" id="d5_3" style="left:219px;top:701.61px;transform:scaleX(1.09816);">seed (-time),</div>
<div class="dl" id="d5_4" style="left:337px;top:701.61px;transform:scaleX(1.06667);">sowing-time.</div>
<div class="dl" id="d6_0" style="left:13px;top:737.61px;transform:scaleX(1.14408);"><b style="font-size:21px">Total KJV occurrences: <span style="display:inline-block;line-height:23.25px;transform:scaleY(.74);transform-origin:50% 18.71px">2</span><span style="display:inline-block;line-height:23.25px;transform:scaleY(.74);transform-origin:50% 18.71px">2</span><span style="display:inline-block;line-height:23.25px;transform:translateY(3.99px)">9</span></b></div>
</body></html>
